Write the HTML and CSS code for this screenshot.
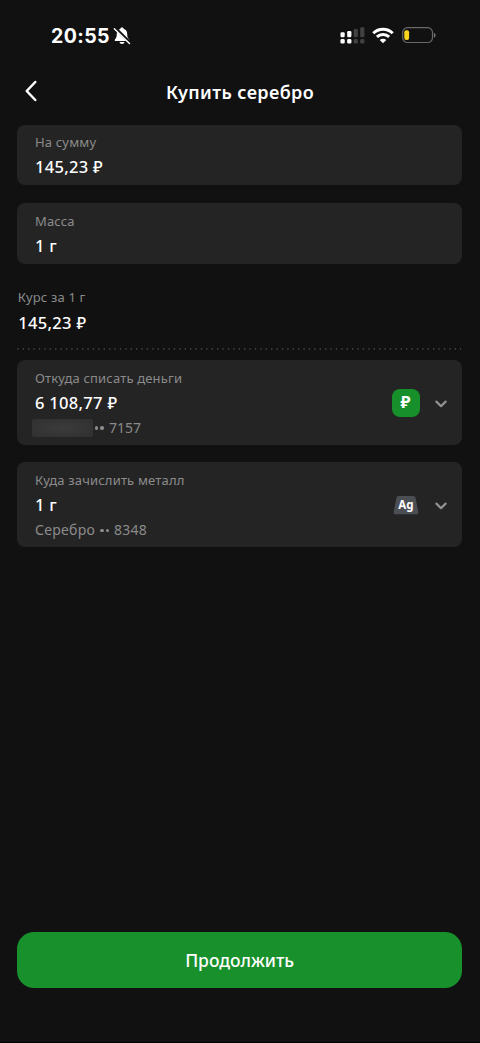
FILE: index.html
```html
<!DOCTYPE html>
<html lang="ru">
<head>
<meta charset="utf-8">
<meta name="viewport" content="width=device-width, initial-scale=1">
<title>Купить серебро</title>
<link rel="stylesheet" href="styles.css">
</head>
<body>
<div class="screen">
  <div class="status">
    <span class="clock">20:55</span>
    <svg class="bell" width="18" height="18" viewBox="0 0 18 18">
      <path d="M9 .6C8 .6 7.300 1.200 7.100 2.100 4.800 2.800 3.800 4.600 3.800 7c0 3-.6 4-1.700 5.200-.8.9-.4 1.800.6 1.800h12.600c1 0 1.400-.9.600-1.800C14.800 11 14.200 10 14.200 7c0-2.400-1-4.200-3.300-4.900C10.700 1.200 10 .6 9 .6zM6.500 15c.3 1.300 1.200 2 2.500 2s2.200-.7 2.500-2z" fill="#fff"/>
      <path d="M2 .9 17.500 16.100" stroke="#111" stroke-width="3"/>
      <path d="M1.300 1.700 16.500 16.600" stroke="#fff" stroke-width="1.400" stroke-linecap="round"/>
    </svg>
    <svg class="signal" width="25" height="17" viewBox="0 0 25 17">
      <g fill="#fff"><rect x=".5" y="5.300" width="4.200" height="5" rx="1.200"/><rect x="7.200" y="4" width="4.200" height="6.300" rx="1.200"/><rect x=".5" y="12" width="4.200" height="4.500" rx="1.300"/><rect x="7.200" y="12" width="4.200" height="4.500" rx="1.300"/></g>
      <g fill="#414141"><rect x="13.700" y="2" width="4.200" height="8.300" rx="1.200"/><rect x="20.200" y=".2" width="4.200" height="10.100" rx="1.200"/><rect x="13.700" y="12" width="4.200" height="4.500" rx="1.300"/><rect x="20.200" y="12" width="4.200" height="4.500" rx="1.300"/></g>
    </svg>
    <svg class="wifi" width="22" height="17" viewBox="0 0 22 17">
      <g fill="none" stroke="#fff" stroke-width="3"><path d="M1.300 6.200C6.700.9 15.300.9 20.700 6.200"/><path d="M4.900 9.900c3.400-3.300 8.800-3.300 12.200 0"/></g>
      <path d="M11 16.200 7.700 12.900c1.900-1.700 4.700-1.700 6.600 0z" fill="#fff"/>
    </svg>
    <svg class="battery" width="35" height="17" viewBox="0 0 35 17">
      <rect x=".7" y=".7" width="29.800" height="14.800" rx="4.800" fill="none" stroke="#696969" stroke-width="1.200"/>
      <rect x="2.300" y="3.200" width="4.800" height="9.800" rx="2" fill="#fbd51c"/>
      <path d="M31.900 5.700v5c2.200-.8 2.200-4.200 0-5z" fill="#777"/>
    </svg>
  </div>
  <header class="header">
    <svg class="back" width="14" height="22" viewBox="0 0 14 22"><path d="M11.300 2 2.700 11l8.600 9" fill="none" stroke="#fff" stroke-width="2.500" stroke-linecap="round" stroke-linejoin="round"/></svg>
    <h1 class="title">Купить серебро</h1>
  </header>
  <main class="content">
    <section class="card field">
      <div class="label">На сумму</div>
      <div class="value">145,23 ₽</div>
    </section>
    <section class="card field mass">
      <div class="label">Масса</div>
      <div class="value">1 г</div>
    </section>
    <section class="rate">
      <div class="label">Курс за 1 г</div>
      <div class="value">145,23 ₽</div>
    </section>
    <svg class="divider" width="446" height="2" viewBox="0 0 446 2"><path d="M.2 1H444" stroke="#484848" stroke-width="1.400" stroke-dasharray="1.400 4"/></svg>
    <section class="card account">
      <div class="info">
        <div class="label">Откуда списать деньги</div>
        <div class="value">6 108,77 ₽</div>
        <div class="note"><span class="mask"></span><span class="dots"><i></i><i></i></span><span class="masked-digits">7157</span></div>
      </div>
      <div class="badge rub">₽</div>
      <svg class="chevron" width="14" height="10" viewBox="0 0 14 10"><path d="m2.400 2.600 4.600 4.600 4.600-4.600" fill="none" stroke="#929292" stroke-width="2.200" stroke-linecap="round" stroke-linejoin="round"/></svg>
    </section>
    <section class="card account">
      <div class="info">
        <div class="label">Куда зачислить металл</div>
        <div class="value">1 г</div>
        <div class="note"><span class="metal">Серебро</span><span class="dots"><i></i><i></i></span><span class="digits">8348</span></div>
      </div>
      <svg class="badge" width="28" height="28" viewBox="0 0 28 28">
        <path d="M6.500 5h15q1.500 0 2 1.700L26.300 21q.4 2.200-1.500 2.200H3.200Q1.300 23.200 1.700 21L4.500 6.700Q5 5 6.500 5z" fill="#4b4e53"/>
        <text x="14" y="18" text-anchor="middle" class="ag">Ag</text>
      </svg>
      <svg class="chevron" width="14" height="10" viewBox="0 0 14 10"><path d="m2.400 2.600 4.600 4.600 4.600-4.600" fill="none" stroke="#929292" stroke-width="2.200" stroke-linecap="round" stroke-linejoin="round"/></svg>
    </section>
  </main>
  <button class="submit">Продолжить</button>
</div>
</body>
</html>
```

FILE: styles.css
```css
* { box-sizing: border-box; }
body { margin: 0; background: #111; }
.screen {
  display: flex;
  flex-direction: column;
  width: 480px;
  height: 1043px;
  padding-bottom: 54px;
  border-bottom: 1px solid #000;
  background: #111;
  color: #fff;
  font-family: "Noto Sans", "Open Sans", sans-serif;
}
.status {
  display: flex;
  align-items: center;
  height: 70px;
  padding: 1px 43.500px 0 51px;
}
.clock {
  width: 62px;
  font: 700 19.5px/24px Inter, sans-serif;
  letter-spacing: .4px;
}
.signal { margin-left: auto; }
.wifi { margin: 0 8px 0 7px; }
.header {
  display: grid;
  grid-template-columns: 1fr auto 1fr;
  align-items: center;
  height: 42px;
}
.back { margin-left: 24px; }
.title { margin: 0; padding-top: 2px; font-size: 18px; line-height: 24px; font-weight: 600; letter-spacing: .38px; white-space: nowrap; }
.content { padding: 12.500px 18px 0 17.300px; }
.card { border-radius: 8px; background: #242424; }
.field { height: 60.800px; margin-bottom: 17.700px; padding: 7.500px 17.700px 0; }
.mass { padding-top: 8.200px; }
.label { color: #8b8b8b; font-size: 13px; line-height: 20px; letter-spacing: .17px; white-space: nowrap; }
.value { margin-top: 2px; font-size: 16.500px; line-height: 24px; font-weight: 500; letter-spacing: .3px; white-space: nowrap; }
.field .value { margin-top: 2.500px; }
.rate { height: 66.500px; padding: 6px 0 0 1px; }
.rate .label { margin-left: -.5px; }
.rate .value { margin-top: 4px; }
.divider { display: block; margin-bottom: 10px; }
.account { display: flex; align-items: center; height: 84.800px; margin-bottom: 17.700px; padding: 1px 14.500px 0 17.700px; }
.info { flex: 1; height: 100%; padding-top: 7px; }
.info .value { margin-top: 3px; }
.note { display: flex; align-items: center; height: 20px; margin-top: 3px; color: #8b8b8b; font-size: 14px; line-height: 20px; }
.mask { width: 61px; height: 18px; margin: 0 2px 0 -3px; border-radius: 2px; background: radial-gradient(ellipse at center, #3b3b3b, #303030); }
.dots { display: flex; gap: 2px; margin-right: 5px; }
.dots i { width: 3.500px; height: 3.500px; border-radius: 50%; background: #8b8b8b; }
.metal { margin-right: 5px; letter-spacing: .28px; }
.digits { letter-spacing: .25px; }
.badge { width: 28px; height: 28px; margin-right: 14px; }
.rub { border-radius: 8px; background: #17902b; font-size: 16.500px; line-height: 26px; font-weight: 700; text-align: center; }
.ag { fill: #fff; font: 700 11.500px "Noto Sans", sans-serif; letter-spacing: .2px; }
.chevron { display: block; margin-top: 2px; }
.submit {
  height: 56.500px;
  margin: auto 18px 0 17.300px;
  padding: 0;
  border: 0;
  border-radius: 17px;
  background: #18902c;
  color: #fff;
  font: 500 17.500px/24px "Noto Sans", "Open Sans", sans-serif;
}
```
